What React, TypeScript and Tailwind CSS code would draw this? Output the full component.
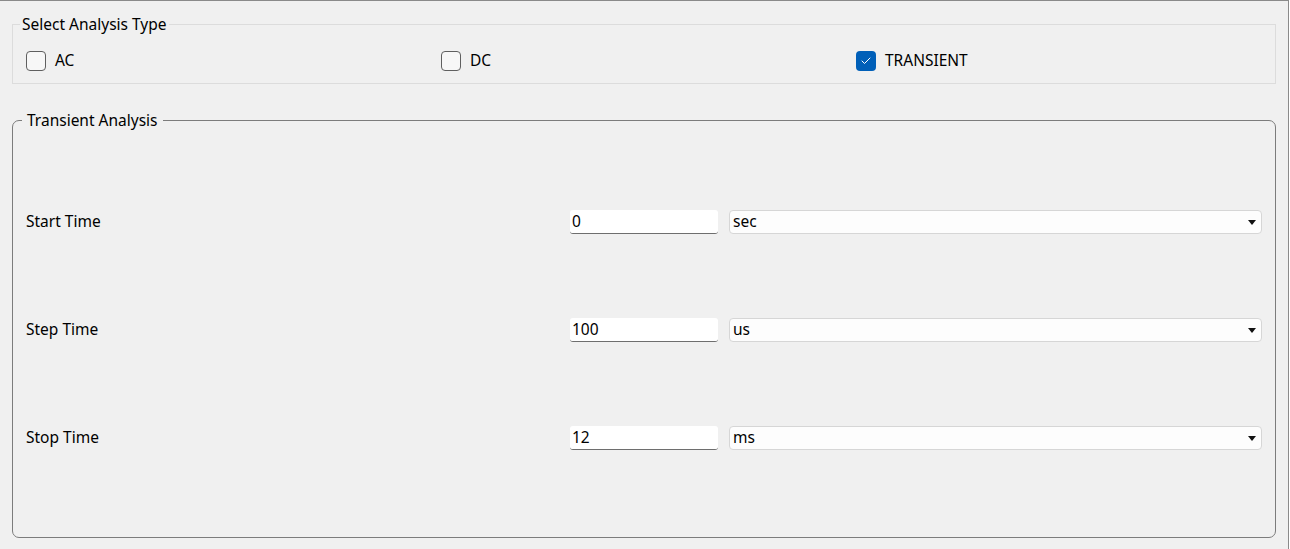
import { Check } from "lucide-react";

const font = { fontFamily: '"Segoe UI", "Noto Sans", "Open Sans", sans-serif' };

function CheckBox({ label, checked }: { label: string; checked?: boolean }) {
  return (
    <label className="flex items-center gap-[9px]">
      {checked ? (
        <span className="w-[20px] h-[20px] rounded-[4px] bg-[#005fb8] flex items-center justify-center">
          <Check className="w-[12px] h-[12px] text-white" strokeWidth={2} />
        </span>
      ) : (
        <span className="w-[20px] h-[20px] rounded-[4px] border border-[#5f5f5f] bg-[#f7f7f7]" />
      )}
      <span className="text-[15.5px] text-black">{label}</span>
    </label>
  );
}

const rows = [
  { label: "Start Time", value: "0", unit: "sec" },
  { label: "Step Time", value: "100", unit: "us" },
  { label: "Stop Time", value: "12", unit: "ms" },
];

function ParamRow({ label, value, unit }: { label: string; value: string; unit: string }) {
  return (
    <div className="h-[108px] flex items-center">
      <span className="w-[544px] text-[15.5px] text-black">{label}</span>
      <div className="w-[148px] h-[24px] bg-white rounded-[3px] border-b border-[#6e6e6e] pl-[2px] flex items-center text-[15.5px] text-black">
        {value}
      </div>
      <div className="ml-[11px] flex-1 h-[24px] bg-[#fdfdfd] border border-[#d6d6d6] rounded-[4px] pl-[3px] pr-[5px] flex items-center justify-between text-[15.5px] text-black">
        <span>{unit}</span>
        <svg width="8" height="5" viewBox="0 0 8 5">
          <path d="M0 0h8L4 5z" fill="#111" />
        </svg>
      </div>
    </div>
  );
}

export default function App() {
  return (
    <div className="w-[1289px] h-[549px] bg-[#f0f0f0] border-t border-r border-[#8a8a8a] px-[12px] pt-[16px]" style={font}>
      <fieldset className="border border-[#dcdcdc] h-[67px] pl-[13px] pr-[4px]">
        <legend className="-ml-[6px] px-[2px] text-[15.5px] leading-[15px] text-black">Select Analysis Type</legend>
        <div className="grid grid-cols-3 mt-[17px]">
          <CheckBox label="AC" />
          <CheckBox label="DC" />
          <CheckBox label="TRANSIENT" checked />
        </div>
      </fieldset>

      <fieldset className="mt-[29px] border border-[#7c7c7c] rounded-[7px] h-[425px] pl-[13px] pr-[13px]">
        <legend className="-ml-[4px] px-[5px] text-[15.5px] leading-[15px] text-black">Transient Analysis</legend>
        <div className="pt-[40px] flex flex-col">
          {rows.map((r) => (
            <ParamRow key={r.label} {...r} />
          ))}
        </div>
      </fieldset>
    </div>
  );
}
